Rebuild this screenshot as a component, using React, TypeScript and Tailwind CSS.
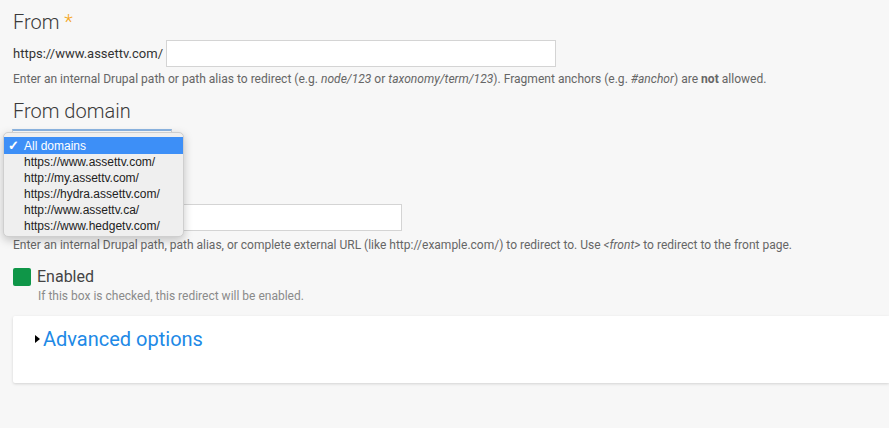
import React from "react";

const items = [
  "https://www.assettv.com/",
  "http://my.assettv.com/",
  "https://hydra.assettv.com/",
  "http://www.assettv.ca/",
  "https://www.hedgetv.com/",
];

export default function App() {
  return (
    <div
      className="relative w-[889px] h-[428px] overflow-hidden bg-[#f7f7f7] text-[#333]"
      style={{ fontFamily: "Roboto, 'Noto Sans', sans-serif" }}
    >
      <div className="pl-[13px] pt-[9px]">
        {/* From */}
        <div className="text-[20px] leading-[26px] text-[#3a3a3a] font-light">
          From <span className="text-[#f5a623]">*</span>
        </div>
        <div className="mt-[5px] flex items-center h-[27px]">
          <span className="text-[13px] text-[#333] mr-[3px]">https://www.assettv.com/</span>
          <div className="w-[390px] h-[27px] bg-white border border-[#d4d4d4]" />
        </div>
        <div className="mt-[4px] text-[12.05px] leading-[16px] text-[#666]">
          Enter an internal Drupal path or path alias to redirect (e.g. <i>node/123</i> or{" "}
          <i>taxonomy/term/123</i>). Fragment anchors (e.g. <i>#anchor</i>) are{" "}
          <b className="font-bold">not</b> allowed.
        </div>

        {/* From domain */}
        <div className="mt-[11px] text-[20px] leading-[26px] text-[#3a3a3a] font-light">From domain</div>
        <div className="mt-[5px] ml-[-1px] w-[160px] h-[26px] bg-white border border-[#d4d4d4] border-t-2 border-t-[#8db6e3]" />

        {/* To (label hidden under the open dropdown) */}
        <div className="mt-[10px] h-[26px]" />
        <div className="mt-[13px] w-[389px] h-[27px] bg-white border border-[#d4d4d4]" />
        <div className="mt-[6px] text-[12px] leading-[16px] text-[#666]">
          Enter an internal Drupal path, path alias, or complete external URL (like http://example.com/) to
          redirect to. Use <i>&lt;front&gt;</i> to redirect to the front page.
        </div>

        {/* Enabled */}
        <div className="mt-[15px] flex items-center h-[18px]">
          <div className="w-[18px] h-[18px] rounded-[2px] bg-[#0f9648]" />
          <span className="ml-[6px] text-[16px] text-[#444]">Enabled</span>
        </div>
        <div className="mt-[2px] pl-[25px] text-[12px] leading-[16px] text-[#8a8a8a]">
          If this box is checked, this redirect will be enabled.
        </div>

        {/* Advanced options card */}
        <div className="mt-[12px] h-[67px] bg-white rounded-l-[2px] shadow-[0_1px_3px_rgba(0,0,0,0.15)] pl-[22px] pt-[10px]">
          <div className="flex items-center">
            <svg width="5" height="8" viewBox="0 0 5 8" className="mr-[3px]">
              <path d="M0 0 L5 4 L0 8 Z" fill="#000" />
            </svg>
            <span className="text-[20px] leading-[26px] text-[#2189e6]">Advanced options</span>
          </div>
        </div>
      </div>

      {/* Dropdown overlay */}
      <div
        className="absolute left-[3px] top-[132px] w-[181px] h-[105px] rounded-[5px] bg-[#efefef] border border-[#cfcfcf] shadow-[0_3px_10px_rgba(0,0,0,0.22)] pt-[4px]"
        style={{ fontFamily: "'Liberation Sans', Arial, sans-serif" }}
      >
        <div className="h-[17px] bg-[#3d8ff7] text-white flex items-center text-[12px]">
          <span className="w-[20px] pl-[4px] text-[13px] font-bold leading-none">✓</span>
          <span>All domains</span>
        </div>
        {items.map((t) => (
          <div key={t} className="h-[16px] flex items-center pl-[20px] text-[12px] text-[#222]">
            {t}
          </div>
        ))}
      </div>
    </div>
  );
}
